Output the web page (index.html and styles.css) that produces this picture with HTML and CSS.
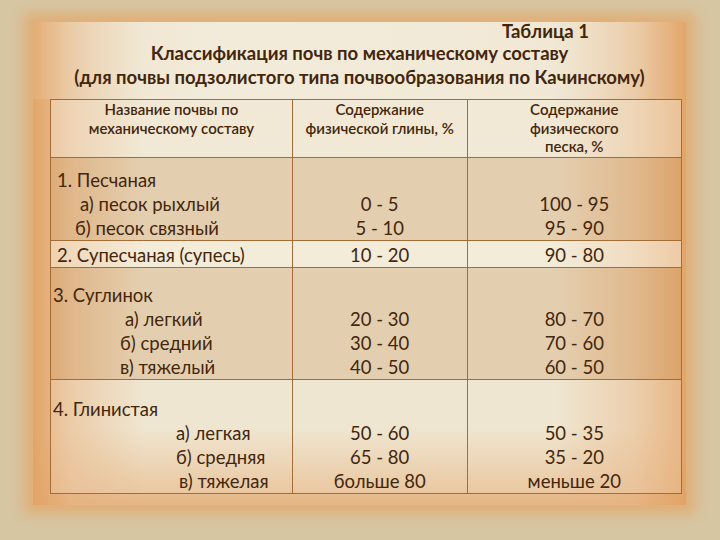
FILE: index.html
```html
<!DOCTYPE html>
<html lang="ru">
<head>
<meta charset="utf-8">
<link rel="stylesheet" href="styles.css">
</head>
<body>
<div class="slide">
  <div class="frame">
    <div class="titles">
      <div class="t-num">Таблица 1</div>
      <div class="t-main">Классификация почв по механическому составу</div>
      <div class="t-main">(для почвы подзолистого типа почвообразования по Качинскому)</div>
    </div>
    <table class="soil">
      <colgroup><col class="c1"><col class="c2"><col class="c3"></colgroup>
      <tr class="head">
        <td class="h1">Название почвы по<br>механическому составу</td>
        <td class="h2">Содержание<br>физической глины, %</td>
        <td class="h3">Содержание<br>физического<br>песка, %</td>
      </tr>
      <tr class="r1 dark">
        <td class="name"><div class="l0">1. Песчаная</div><div class="la">а) песок рыхлый</div><div class="lb">б) песок связный</div></td>
        <td class="num">0 - 5<br>5 - 10</td>
        <td class="num">100 - 95<br>95 - 90</td>
      </tr>
      <tr class="r2">
        <td class="name"><div class="l0">2. Супесчаная (супесь)</div></td>
        <td class="num">10 - 20</td>
        <td class="num">90 - 80</td>
      </tr>
      <tr class="r3 dark">
        <td class="name"><div class="m0">3. Суглинок</div><div class="ma">а) легкий</div><div class="mb">б) средний</div><div class="mb">в) тяжелый</div></td>
        <td class="num">20 - 30<br>30 - 40<br>40 - 50</td>
        <td class="num">80 - 70<br>70 - 60<br>60 - 50</td>
      </tr>
      <tr class="r4">
        <td class="name"><div class="m0">4. Глинистая</div><div class="na">а) легкая</div><div class="na">б) средняя</div><div class="nc">в) тяжелая</div></td>
        <td class="num">50 - 60<br>65 - 80<br>больше 80</td>
        <td class="num">50 - 35<br>35 - 20<br>меньше 20</td>
      </tr>
    </table>
  </div>
</div>
</body>
</html>
```
FILE: styles.css
```css
html, body { margin: 0; padding: 0; }
body {
  width: 720px; height: 540px; overflow: hidden;
  font-family: Lato, "Open Sans", "Liberation Sans", sans-serif;
  color: #43260c;
}
.slide {
  width: 720px; height: 540px; box-sizing: border-box;
  padding: 22px 34px 0 33px;
  background: #d7c6a2;
}
.frame {
  height: 483px;
  box-shadow: 0 0 12px 9px rgba(226,170,112,0.85);
  background:
    linear-gradient(to right, rgba(226,162,100,0.95) 0, rgba(230,178,128,0.65) 6%, rgba(236,205,170,0) 17%, rgba(236,205,170,0) 80%, rgba(230,178,128,0.6) 92%, rgba(226,162,100,0.95) 100%),
    linear-gradient(to bottom, rgba(228,165,105,0) 0, rgba(228,165,105,0) 84%, rgba(228,170,115,0.8) 100%),
    #ede3cc;
}
.titles {
  height: 77px;
  box-sizing: border-box;
  font-weight: 700;
  font-size: 18.5px;
  line-height: 24px;
  text-align: center;
  background: linear-gradient(to right, rgba(240,232,212,0.1), rgba(245,239,224,0.7) 30%, rgba(245,239,224,0.5) 75%, rgba(240,232,212,0));
}
.t-num { text-align: right; padding-right: 97px; line-height: 19px; }
.t-main { line-height: 24px; }
table.soil {
  margin-left: 17px;
  width: 632px;
  border-collapse: collapse;
  font-size: 18.5px;
  line-height: 24px;
}
col.c1 { width: 242px; }
col.c2 { width: 175px; }
col.c3 { width: 215px; }
.soil td {
  border: 1px solid #a46d38;
  padding: 0;
  vertical-align: bottom;
}
.head td {
  height: 57px;
  vertical-align: top;
  text-align: center;
  font-size: 15px;
  font-weight: 600;
  line-height: 18.5px;
  padding-top: 0;
}
.head { background: rgba(248,243,228,0.35); }
.dark td { background: rgba(200,150,95,0.26); }
.r1 td { height: 82px; }
.r2 td { height: 26px; background: rgba(250,246,232,0.45); }
.r3 td { height: 111px; }
.r4 td { height: 113px; background: rgba(250,246,232,0.2); }
.num { text-align: center; }
.name div { white-space: nowrap; }
.l0 { padding-left: 6px; }
.la { padding-left: 29px; }
.lb { padding-left: 24px; }
.m0 { padding-left: 2px; }
.ma { padding-left: 74px; }
.mb { padding-left: 69px; }
.na { padding-left: 125px; }
.nc { padding-left: 128px; }
```
